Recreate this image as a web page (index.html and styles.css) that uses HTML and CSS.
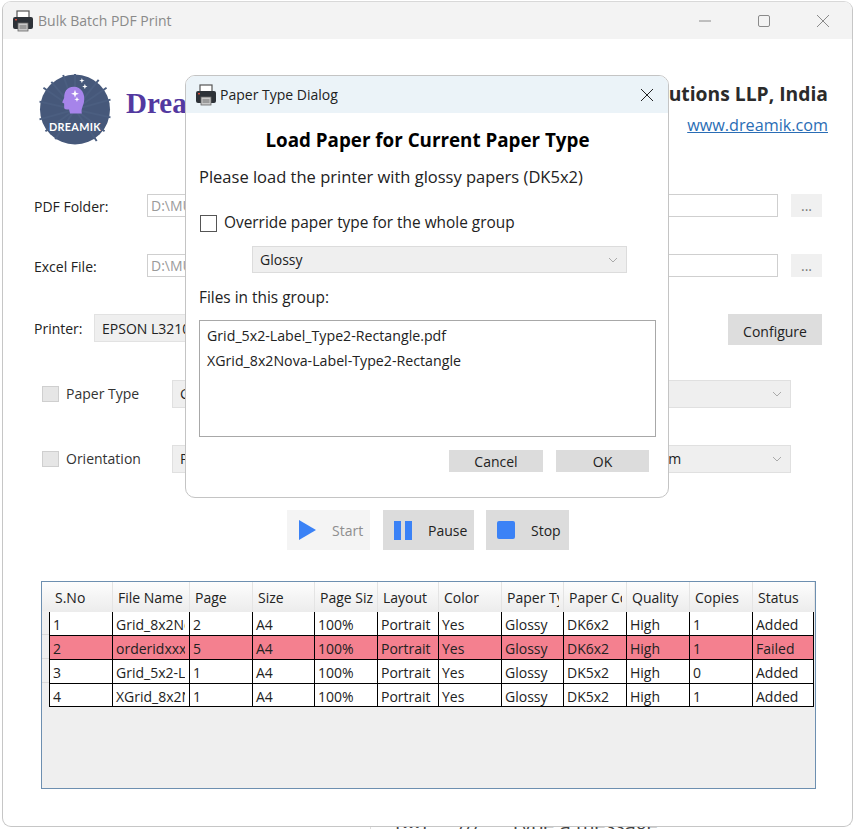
FILE: index.html
```html
<!DOCTYPE html>
<html lang="en">
<head>
    <meta charset="UTF-8">
    <meta name="viewport" content="width=device-width, initial-scale=1.0">
    <title>Bulk Batch PDF Print</title>
    <link rel="stylesheet" href="styles.css">
</head>
<body>
    <svg width="0" height="0" class="defs">
        <symbol id="printer" viewBox="0 0 22 22">
            <rect x="5" y="1" width="12" height="8" fill="#fff" stroke="#555" stroke-width="1.2"/>
            <path d="M3 7h16a2 2 0 0 1 2 2v8a2 2 0 0 1-2 2H3a2 2 0 0 1-2-2V9a2 2 0 0 1 2-2z" fill="#2d3238"/>
            <rect x="3" y="9" width="2" height="1.4" fill="#d84a3a"/>
            <rect x="6" y="13" width="10" height="8" fill="#c9c9c9" stroke="#666" stroke-width=".8"/>
            <path d="M7.5 16h7M7.5 18h7" stroke="#555" stroke-width=".8"/>
        </symbol>
    </svg>

    <div class="behind">
        <span class="behind-a">(ꞏꞏꞏ)</span><span class="behind-b">///</span><span>Type a message</span>
    </div>

    <div class="window">
        <div class="titlebar">
            <div class="title-left">
                <svg class="app-icon"><use href="#printer"/></svg>
                <span>Bulk Batch PDF Print</span>
            </div>
            <div class="win-controls">
                <svg width="14" height="14" viewBox="0 0 14 14"><path d="M1 7h12" stroke="#8a8a8a" fill="none"/></svg>
                <svg width="14" height="14" viewBox="0 0 14 14"><rect x="1.5" y="1.5" width="11" height="11" rx="1.5" stroke="#8a8a8a" fill="none"/></svg>
                <svg width="14" height="14" viewBox="0 0 14 14"><path d="M1 1l12 12M13 1L1 13" stroke="#8a8a8a" fill="none"/></svg>
            </div>
        </div>

        <div class="content">
            <div class="brand">
                <svg class="logo" viewBox="0 0 72 72">
                    <circle cx="36" cy="36" r="35.5" fill="#46587a"/>
                    <path d="M36 36L12 8M36 36L24 1M36 36L60 6M36 36L72 26M36 36L72 44M36 36L0 28M36 36L0 46M36 36L58 68M36 36L16 66M36 36L36 0M36 36L68 14M36 36L4 14M36 36L66 58M36 36L6 58" stroke="#4b5e80" stroke-width="2"/>
                    <path d="M35 13C27 13 25 19 25 24L23 29L25 30L25 34C25 36 27 36 30 36L31 40L43 40C42 36 44 33 45 29C47 20 42 13 35 13z" fill="#a684ea"/>
                    <path d="M36 16l1 3 3 1-3 1-1 3-1-3-3-1 3-1zM38 23l.7 2 2 .7-2 .7-.7 2-.7-2-2-.7 2-.7zM43 4l.7 2 2 .7-2 .7-.7 2-.7-2-2-.7 2-.7zM46 10l.7 2 2 .7-2 .7-.7 2-.7-2-2-.7 2-.7z" fill="#fff"/>
                    <text x="36" y="58" class="logo-text">DREAMIK</text>
                </svg>
                <span class="brand-name">Dreamik</span>
                <div class="brand-right">
                    <div class="company">Print Solutions LLP, India</div>
                    <a class="site" href="#">www.dreamik.com</a>
                </div>
            </div>

            <div class="path-row">
                <label class="path-label">PDF Folder:</label>
                <div class="path-input">D:\MULTIPRINT\Grid</div>
                <div class="browse">...</div>
            </div>
            <div class="path-row">
                <label class="path-label">Excel File:</label>
                <div class="path-input">D:\MULTIPRINT\orders.xlsx</div>
                <div class="browse">...</div>
            </div>

            <div class="printer-row">
                <label>Printer:</label>
                <div class="printer-select">EPSON L3210 Series</div>
                <button class="configure">Configure</button>
            </div>

            <div class="option-row">
                <span class="check-off"></span>
                <label>Paper Type</label>
                <div class="combo-pair">
                    <div class="combo">Glossy</div>
                    <div class="combo combo-wide"><span></span><svg class="chev" width="10" height="6" viewBox="0 0 10 6"><path d="M1 1l4 4 4-4" stroke="#aaa" fill="none"/></svg></div>
                </div>
            </div>
            <div class="option-row">
                <span class="check-off"></span>
                <label>Orientation</label>
                <div class="combo-pair">
                    <div class="combo">Portrait</div>
                    <div class="combo combo-wide"><span class="combo-val">Medium</span><svg class="chev" width="10" height="6" viewBox="0 0 10 6"><path d="M1 1l4 4 4-4" stroke="#aaa" fill="none"/></svg></div>
                </div>
            </div>

            <div class="actions">
                <button class="action action-start">
                    <svg width="18" height="20" viewBox="0 0 18 20"><path d="M0 0l17 10L0 20z" fill="#3b82f6"/></svg>
                    <span>Start</span>
                </button>
                <button class="action action-pause">
                    <svg width="18" height="19" viewBox="0 0 18 19"><path d="M0 0h7v19H0zM11 0h7v19h-7z" fill="#3b82f6"/></svg>
                    <span>Pause</span>
                </button>
                <button class="action action-stop">
                    <svg width="18" height="18" viewBox="0 0 18 18"><rect width="18" height="18" rx="2" fill="#3b82f6"/></svg>
                    <span>Stop</span>
                </button>
            </div>

            <div class="grid-box">
                <div class="grid-head">
                    <div>S.No</div><div>File Name</div><div>Page</div><div>Size</div><div>Page Size</div><div>Layout</div>
                    <div>Color</div><div>Paper Type</div><div>Paper Code</div><div>Quality</div><div>Copies</div><div>Status</div>
                </div>
                <div class="grid-row">
                    <div>1</div><div>Grid_8x2Nova</div><div>2</div><div>A4</div><div>100%</div><div>Portrait</div>
                    <div>Yes</div><div>Glossy</div><div>DK6x2</div><div>High</div><div>1</div><div>Added</div>
                </div>
                <div class="grid-row failed">
                    <div>2</div><div>orderidxxxxx</div><div>5</div><div>A4</div><div>100%</div><div>Portrait</div>
                    <div>Yes</div><div>Glossy</div><div>DK6x2</div><div>High</div><div>1</div><div>Failed</div>
                </div>
                <div class="grid-row">
                    <div>3</div><div>Grid_5x2-Label</div><div>1</div><div>A4</div><div>100%</div><div>Portrait</div>
                    <div>Yes</div><div>Glossy</div><div>DK5x2</div><div>High</div><div>0</div><div>Added</div>
                </div>
                <div class="grid-row">
                    <div>4</div><div>XGrid_8x2Nova</div><div>1</div><div>A4</div><div>100%</div><div>Portrait</div>
                    <div>Yes</div><div>Glossy</div><div>DK5x2</div><div>High</div><div>1</div><div>Added</div>
                </div>
            </div>
        </div>

        <div class="dialog">
            <div class="dialog-title">
                <svg class="app-icon"><use href="#printer"/></svg>
                <span>Paper Type Dialog</span>
                <svg class="dialog-close" width="14" height="14" viewBox="0 0 14 14"><path d="M1 1l12 12M13 1L1 13" stroke="#222" fill="none"/></svg>
            </div>
            <div class="dialog-body">
                <h3>Load Paper for Current Paper Type</h3>
                <p class="dialog-msg">Please load the printer with glossy papers (DK5x2)</p>
                <div class="override">
                    <span class="check-box"></span>
                    <span>Override paper type for the whole group</span>
                </div>
                <div class="dialog-combo">
                    <span>Glossy</span>
                    <svg width="10" height="6" viewBox="0 0 10 6"><path d="M1 1l4 4 4-4" stroke="#aaa" fill="none"/></svg>
                </div>
                <div class="files-label">Files in this group:</div>
                <div class="files-list">
                    <div>Grid_5x2-Label_Type2-Rectangle.pdf</div>
                    <div>XGrid_8x2Nova-Label-Type2-Rectangle</div>
                </div>
                <div class="dialog-buttons">
                    <button>Cancel</button>
                    <button>OK</button>
                </div>
            </div>
        </div>
    </div>
</body>
</html>
```

FILE: styles.css
```css
* { box-sizing: border-box; }
html, body { margin: 0; padding: 0; height: 829px; overflow: hidden; }
body { font-family: "Open Sans", "Noto Sans", sans-serif; font-size: 14px; color: #222; background-color: #fff; padding: 1px 1px 2px 2px; position: relative; }
button { font-family: inherit; font-size: 14px; border: none; color: #222; padding: 0; }
.defs { position: absolute; }

.behind { position: absolute; left: 370px; top: 812px; height: 17px; display: flex; font-size: 20px; color: #444; border-left: 1px solid #ddd; }
.behind-a { margin-left: 25px; width: 62px; }
.behind-b { width: 52px; }

.window { position: relative; height: 826px; background-color: #fff; border: 1px solid #c6c6c6; border-top-color: #d8d8d8; border-radius: 9px; overflow: hidden; }
.titlebar { height: 37px; background-color: #f3f3f3; display: flex; justify-content: space-between; align-items: center; padding: 0 22px 0 9px; color: #8a8a8a; }
.title-left { display: flex; align-items: center; gap: 4px; }
.app-icon { width: 22px; height: 22px; }
.win-controls { display: flex; gap: 45px; }

.content { padding: 35px 30px 0 31px; }

.brand { display: flex; height: 71px; }
.logo { width: 72px; height: 71px; margin-left: 5px; }
.logo-text { font-family: "Lato", sans-serif; font-size: 11px; font-weight: 700; letter-spacing: .3px; fill: #fff; text-anchor: middle; }
.brand-name { font-family: "Liberation Serif", serif; font-size: 29px; font-weight: 700; color: #5339a0; margin-left: 15px; margin-top: 13px; }
.brand-right { margin-left: auto; margin-right: -6px; text-align: right; margin-top: 6px; }
.company { font-size: 19.3px; font-weight: 700; color: #2b2b2b; line-height: 28px; }
.site { display: block; margin-top: 2px; font-size: 16.2px; color: #2a6db5; line-height: 30px; }

.path-row { display: flex; height: 23px; align-items: stretch; margin-top: 49px; }
.path-row + .path-row { margin-top: 37px; }
.path-label { width: 113px; line-height: 25px; }
.path-input { width: 631px; border: 1px solid #cfcfcf; color: #9a9a9a; padding-left: 3px; line-height: 21px; overflow: hidden; white-space: nowrap; }
.browse { width: 31px; margin-left: 13px; background-color: #f0f0f0; color: #777; text-align: center; line-height: 24px; }

.printer-row { display: flex; align-items: flex-start; margin-top: 37px; height: 31px; }
.printer-row label { line-height: 30px; width: 60px; }
.printer-select { width: 200px; height: 28px; background-color: #efefef; border: 1px solid #e2e2e2; padding-left: 7px; line-height: 28px; }
.configure { margin-left: auto; width: 94px; height: 31px; background-color: #dddddd; padding-top: 3px; }

.option-row { display: flex; align-items: center; height: 28px; padding-left: 8px; }
.printer-row + .option-row { margin-top: 35px; }
.option-row + .option-row { margin-top: 37px; }
.check-off { width: 17px; height: 16px; background-color: #e6e6e6; border: 1px solid #cfcfcf; }
.option-row label { width: 106px; margin-left: 7px; padding-bottom: 2px; color: #333; }
.combo-pair { display: flex; gap: 20px; flex: 1; margin-right: 31px; height: 28px; }
.combo { width: 240px; background-color: #efefef; border: 1px solid #e0e0e0; padding-left: 7px; line-height: 26px; }
.combo-wide { flex: 1; display: flex; justify-content: space-between; align-items: center; padding: 0 8px 0 0; }
.combo-val { margin-left: 194px; }

.actions { display: flex; gap: 13px; margin-top: 37px; padding-left: 253px; }
.action { height: 40px; display: flex; align-items: center; background-color: #dcdcdc; padding-left: 11px; }
.action span { margin-left: 16px; }
.action-start { width: 83px; background-color: #f4f4f4; color: #8e8e8e; padding-left: 12px; }
.action-start span { margin-left: 15px; }
.action-pause { width: 91px; margin-right: -1px; }
.action-stop { width: 83px; }

.grid-box {
    margin-top: 31px; margin-left: 7px; width: 775px; height: 208px;
    background-color: #efefef;
    background-image: linear-gradient(#fdfdfd, #ececec), repeating-linear-gradient(#0000 0 23px, #dadada 23px 24px);
    background-size: 7px 29px, 7px 94px;
    background-position: 0 0, 0 29px;
    background-repeat: no-repeat;
    border: 1px solid #6d8fb0; padding-left: 7px;
}
.grid-head, .grid-row { display: grid; width: 765px; grid-template-columns: 63px 77px 63px 62px 63px 61px 63px 62px 63px 63px 63px 62px; }
.grid-head { height: 30px; background: linear-gradient(#fdfdfd, #ececec); }
.grid-head div { padding: 6px 0 0 6px; border-right: 4px solid transparent; box-shadow: 1px 0 0 #e4e4e4; overflow: hidden; white-space: nowrap; }
.grid-row { height: 24px; background-color: #fff; border-bottom: 1px solid #000; }
.grid-row:last-child { height: 23px; }
.grid-row div { padding: 0 0 0 3px; border-left: 1px solid #000; border-right: 4px solid transparent; line-height: 25px; overflow: hidden; white-space: nowrap; }
.grid-row div:last-child { border-right: 1px solid #000; }
.failed { background-color: #f4808f; }

.dialog { position: absolute; left: 182px; top: 73px; width: 484px; height: 423px; background-color: #fff; border: 1px solid #c4c4c4; border-radius: 10px; overflow: hidden; }
.dialog-title { height: 37px; background-color: #ebf3f8; display: flex; align-items: center; gap: 3px; padding-left: 9px; color: #222; }
.dialog-close { margin-left: auto; margin-right: 14px; }
.dialog-body { padding: 0 12px 0 13px; }
.dialog-body h3 { margin: 14px 0 0; font-size: 18.8px; line-height: 26px; text-align: center; color: #000; }
.dialog-msg { margin: 12px 0 0; font-size: 16.5px; line-height: 24px; color: #222; }
.override { display: flex; align-items: center; gap: 7px; margin: 23px 0 0 1px; font-size: 15.4px; line-height: 22px; }
.check-box { width: 17px; height: 17px; border: 1px solid #555; }
.dialog-combo { margin: 12px 0 0 53px; width: 375px; height: 27px; background-color: #efefef; border: 1px solid #dcdcdc; display: flex; justify-content: space-between; align-items: center; padding: 0 8px 0 7px; }
.files-label { margin-top: 14px; font-size: 15.4px; line-height: 22px; }
.files-list { margin-top: 11px; width: 457px; height: 117px; border: 1px solid #a8a8a8; padding: 3px 7px; font-size: 14.2px; line-height: 24.5px; }
.dialog-buttons { display: flex; justify-content: flex-end; gap: 13px; margin: 13px 7px 0 0; }
.dialog-buttons button { width: 94px; height: 22px; background-color: #dcdcdc; }
.dialog-buttons button:last-child { width: 93px; }
```
